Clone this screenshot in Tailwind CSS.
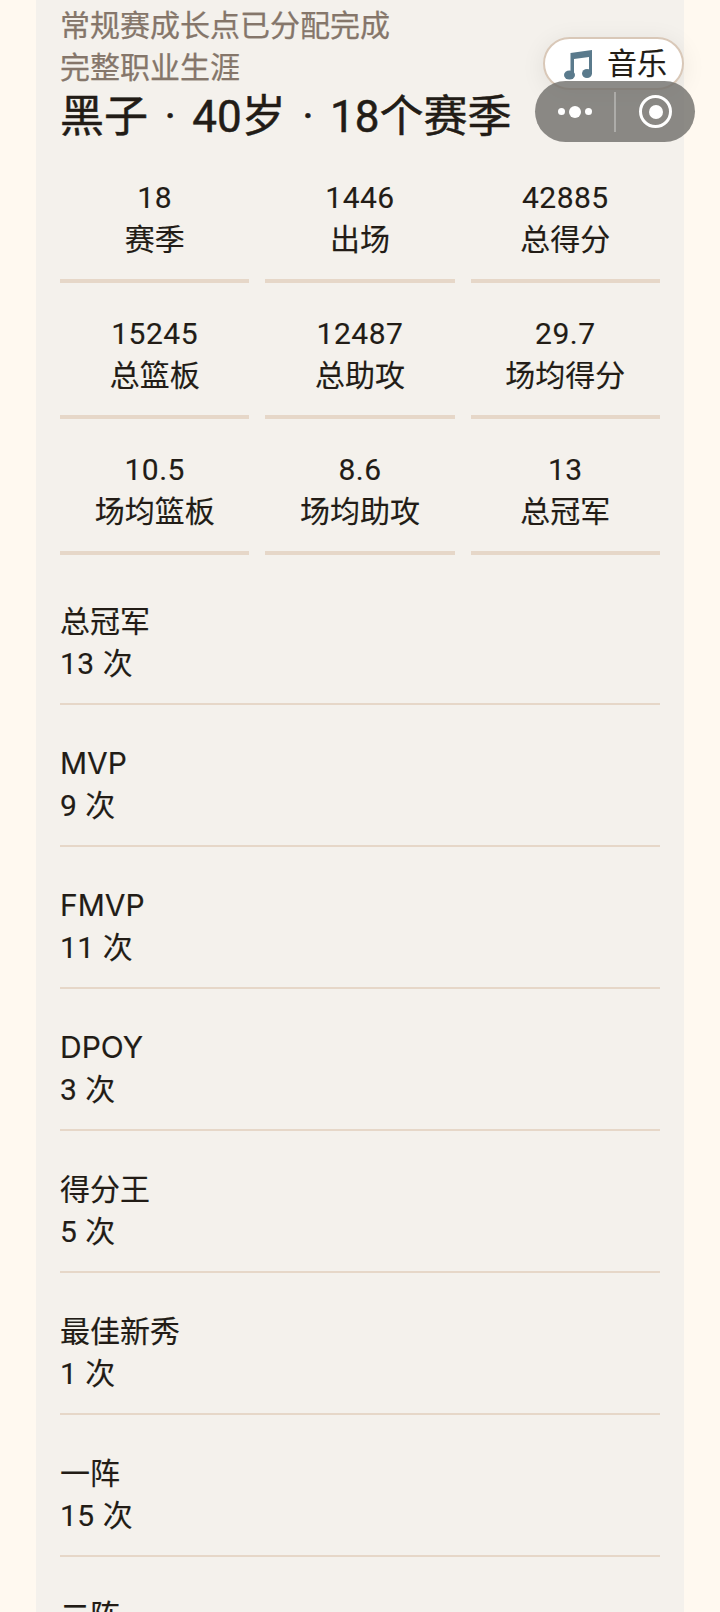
<!DOCTYPE html>
<html lang="zh-CN">
  <head>
    <meta charset="UTF-8" />
    <meta name="viewport" content="width=device-width, initial-scale=1.0" />
    <title>职业生涯</title>
    <script src="https://cdn.jsdelivr.net/npm/@tailwindcss/browser@4"></script>
  </head>
  <body class="bg-[#fff9f0] font-['Roboto','Noto_Sans_CJK_SC',sans-serif] text-[#221c16] [-webkit-text-stroke:0.15px]">
    <div class="relative h-[1612px] overflow-hidden px-9">
      <!-- Career card, scrolled so its top is out of view -->
      <main class="bg-[#f4f1ec] px-6 pt-[5px] h-full">
        <p class="text-[30px] leading-[42px] text-[#85766a] [-webkit-text-stroke:0.25px]">常规赛成长点已分配完成</p>
        <p class="text-[30px] leading-[42px] text-[#85766a] [-webkit-text-stroke:0.25px]">完整职业生涯</p>
        <h1 class="text-[44px] leading-[56px] font-normal [word-spacing:5.5px] [-webkit-text-stroke:0.5px]">黑子 · 40岁 · 18个赛季</h1>

        <div id="stats" class="grid grid-cols-3 gap-x-4 gap-y-[30px] mt-8"></div>
        <div id="honors" class="mt-2"></div>
      </main>

      <!-- Music button, sits under the capsule -->
      <button class="absolute left-[543px] top-[37px] w-[141px] h-[53px] rounded-full bg-white border-2 border-[#d9c8b8] shadow-[0_4px_24px_rgba(0,0,0,0.08)] flex items-center pl-[18px] gap-[14px] text-[30px] leading-none">
        <svg class="w-[30px] h-[32px]" viewBox="0 0 30 32" fill="#5a7a8c">
          <path d="M7.5 5 L29 2 V26 H26 V9 L11 11 V27 H7.5 Z" />
          <ellipse cx="6.5" cy="27" rx="5.5" ry="4.5" />
          <ellipse cx="24" cy="25.5" rx="5" ry="4.5" />
        </svg>
        <span>音乐</span>
      </button>

      <!-- Mini program capsule -->
      <div class="absolute left-[535px] top-[81px] w-[160px] h-[61px] rounded-full bg-[#6f6e6a]/80 flex items-center">
        <div class="w-[79px] flex items-center justify-center gap-[4px]">
          <span class="w-[7px] h-[7px] rounded-full bg-white"></span>
          <span class="w-[12px] h-[12px] rounded-full bg-white"></span>
          <span class="w-[7px] h-[7px] rounded-full bg-white"></span>
        </div>
        <div class="w-[2px] h-[40px] bg-white/30"></div>
        <div class="flex-1 flex items-center justify-center">
          <div class="w-[33px] h-[33px] rounded-full border-[3px] border-white flex items-center justify-center">
            <span class="w-[14px] h-[14px] rounded-full bg-white"></span>
          </div>
        </div>
      </div>
    </div>

    <script>
      // Stat tiles
      const stats = [
        ["18", "赛季"],
        ["1446", "出场"],
        ["42885", "总得分"],
        ["15245", "总篮板"],
        ["12487", "总助攻"],
        ["29.7", "场均得分"],
        ["10.5", "场均篮板"],
        ["8.6", "场均助攻"],
        ["13", "总冠军"],
      ];

      // Honor rows
      const honors = [
        ["总冠军", 13],
        ["MVP", 9],
        ["FMVP", 11],
        ["DPOY", 3],
        ["得分王", 5],
        ["最佳新秀", 1],
        ["一阵", 15],
        ["二阵", 2],
      ];

      document.getElementById("stats").innerHTML = stats
        .map(
          ([value, label]) => `
          <div class="text-center text-[30px] leading-[42px] pb-[18px] border-b-4 border-[#e6d7c8]">
            <div class="tracking-[0.5px]">${value}</div>
            <div>${label}</div>
          </div>`
        )
        .join("");

      document.getElementById("honors").innerHTML = honors
        .map(
          ([name, count]) => `
          <div class="text-[30px] leading-[42px] pt-[37px] pb-[19px] border-b-2 border-[#e6d7c8]">
            <div class="font-['Inter','Noto_Sans_CJK_SC',sans-serif]">${name}</div>
            <div class="tracking-[0.5px] translate-y-px">${count} 次</div>
          </div>`
        )
        .join("");
    </script>
  </body>
</html>
